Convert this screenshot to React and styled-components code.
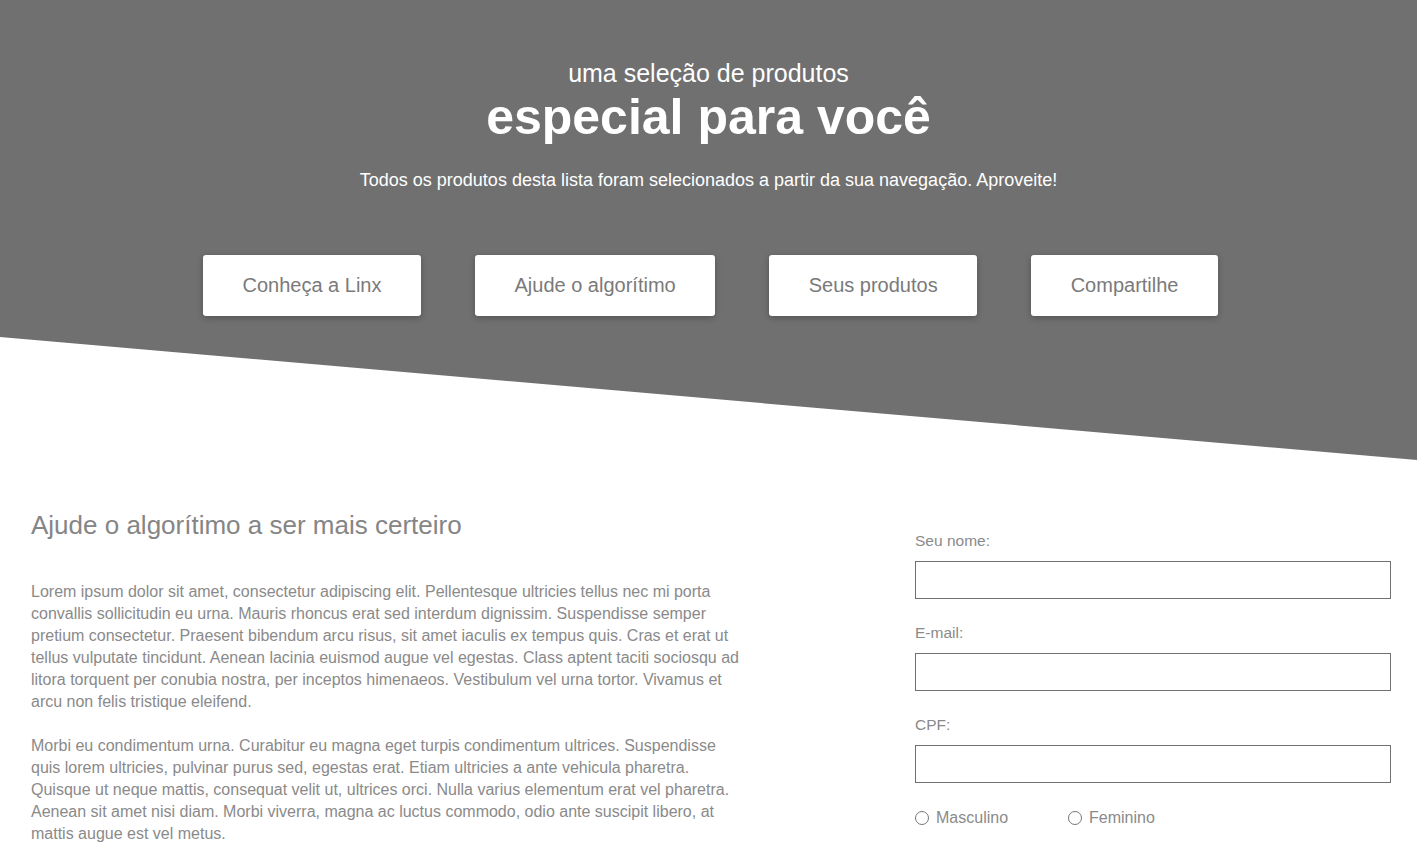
import styled, { createGlobalStyle } from "styled-components";

const Global = createGlobalStyle`
    body {
        margin: 0;
        font-family: "Liberation Sans", Arial, sans-serif;
        background: #fff;
    }
    * { box-sizing: border-box; }
`

const Hero = styled.header`
    background: #707070;
    height: 460px;
    padding-top: 59px;
    clip-path: polygon(0 0, 100% 0, 100% 100%, 0 337px);
    color: #fff;
    text-align: center;
`
const Kicker = styled.p`
    margin: 0;
    font-size: 25px;
    line-height: 29px;
`
const Title = styled.h1`
    margin: 1px 0 0;
    font-size: 50px;
    line-height: 56px;
    font-weight: bold;
`
const Lead = styled.p`
    margin: 24px 0 0;
    font-size: 18px;
    line-height: 22px;
`
const Nav = styled.nav`
    display: flex;
    justify-content: center;
    gap: 54px;
    margin-top: 64px;
    padding-left: 4px;
`
const NavButton = styled.a`
    display: flex;
    align-items: center;
    justify-content: center;
    height: 61px;
    padding: 0 39.5px;
    background: #fff;
    border-radius: 3px;
    box-shadow: 0 2px 6px rgba(0, 0, 0, 0.25);
    color: #7a7a7a;
    font-size: 20px;
    text-decoration: none;
    cursor: pointer;
`

const Main = styled.main`
    display: flex;
    justify-content: space-between;
    padding: 0 26px 0 31px;
`
const Info = styled.section`
    width: 712px;
    padding-top: 50px;
    color: #8a8a8a;
`
const Heading = styled.h2`
    margin: 0 0 41px;
    font-size: 26px;
    line-height: 30px;
    font-weight: normal;
    color: #858585;
`
const Text = styled.p`
    margin: 0 0 22px;
    font-size: 16px;
    line-height: 22px;
`
const Form = styled.form`
    width: 476px;
    padding-top: 72px;
    display: flex;
    flex-direction: column;
`
const Field = styled.label`
    display: flex;
    flex-direction: column;
    gap: 11px;
    margin-bottom: 25px;
    color: #8a8a8a;
    font-size: 15.5px;
    line-height: 18px;
`
const Input = styled.input`
    height: 38px;
    border: 1px solid #707070;
    border-radius: 0;
    padding: 0 10px;
    font: inherit;
    outline: none;
`
const Radios = styled.div`
    display: flex;
    gap: 60px;
`
const Radio = styled.label`
    display: flex;
    align-items: center;
    gap: 7px;
    color: #8a8a8a;
    font-size: 16px;
    line-height: 20px;
    input {
        appearance: none;
        margin: 0;
        width: 14px;
        height: 14px;
        border: 1px solid #777;
        border-radius: 50%;
    }
`

export default function App() {
    return (
        <>
            <Global />
            <Hero>
                <Kicker>uma seleção de produtos</Kicker>
                <Title>especial para você</Title>
                <Lead>Todos os produtos desta lista foram selecionados a partir da sua navegação. Aproveite!</Lead>
                <Nav>
                    <NavButton>Conheça a Linx</NavButton>
                    <NavButton>Ajude o algorítimo</NavButton>
                    <NavButton>Seus produtos</NavButton>
                    <NavButton>Compartilhe</NavButton>
                </Nav>
            </Hero>
            <Main>
                <Info>
                    <Heading>Ajude o algorítimo a ser mais certeiro</Heading>
                    <Text>
                        Lorem ipsum dolor sit amet, consectetur adipiscing elit. Pellentesque ultricies tellus nec mi porta convallis sollicitudin eu urna. Mauris rhoncus erat sed interdum dignissim. Suspendisse semper pretium consectetur. Praesent bibendum arcu risus, sit amet iaculis ex tempus quis. Cras et erat ut tellus vulputate tincidunt. Aenean lacinia euismod augue vel egestas. Class aptent taciti sociosqu ad litora torquent per conubia nostra, per inceptos himenaeos. Vestibulum vel urna tortor. Vivamus et arcu non felis tristique eleifend.
                    </Text>
                    <Text>
                        Morbi eu condimentum urna. Curabitur eu magna eget turpis condimentum ultrices. Suspendisse quis lorem ultricies, pulvinar purus sed, egestas erat. Etiam ultricies a ante vehicula pharetra. Quisque ut neque mattis, consequat velit ut, ultrices orci. Nulla varius elementum erat vel pharetra. Aenean sit amet nisi diam. Morbi viverra, magna ac luctus commodo, odio ante suscipit libero, at mattis augue est vel metus.
                    </Text>
                </Info>
                <Form>
                    <Field>
                        Seu nome:
                        <Input type="text" />
                    </Field>
                    <Field>
                        E-mail:
                        <Input type="email" />
                    </Field>
                    <Field>
                        CPF:
                        <Input type="text" />
                    </Field>
                    <Radios>
                        <Radio><input type="radio" name="sexo" />Masculino</Radio>
                        <Radio><input type="radio" name="sexo" />Feminino</Radio>
                    </Radios>
                </Form>
            </Main>
        </>
    );
}
